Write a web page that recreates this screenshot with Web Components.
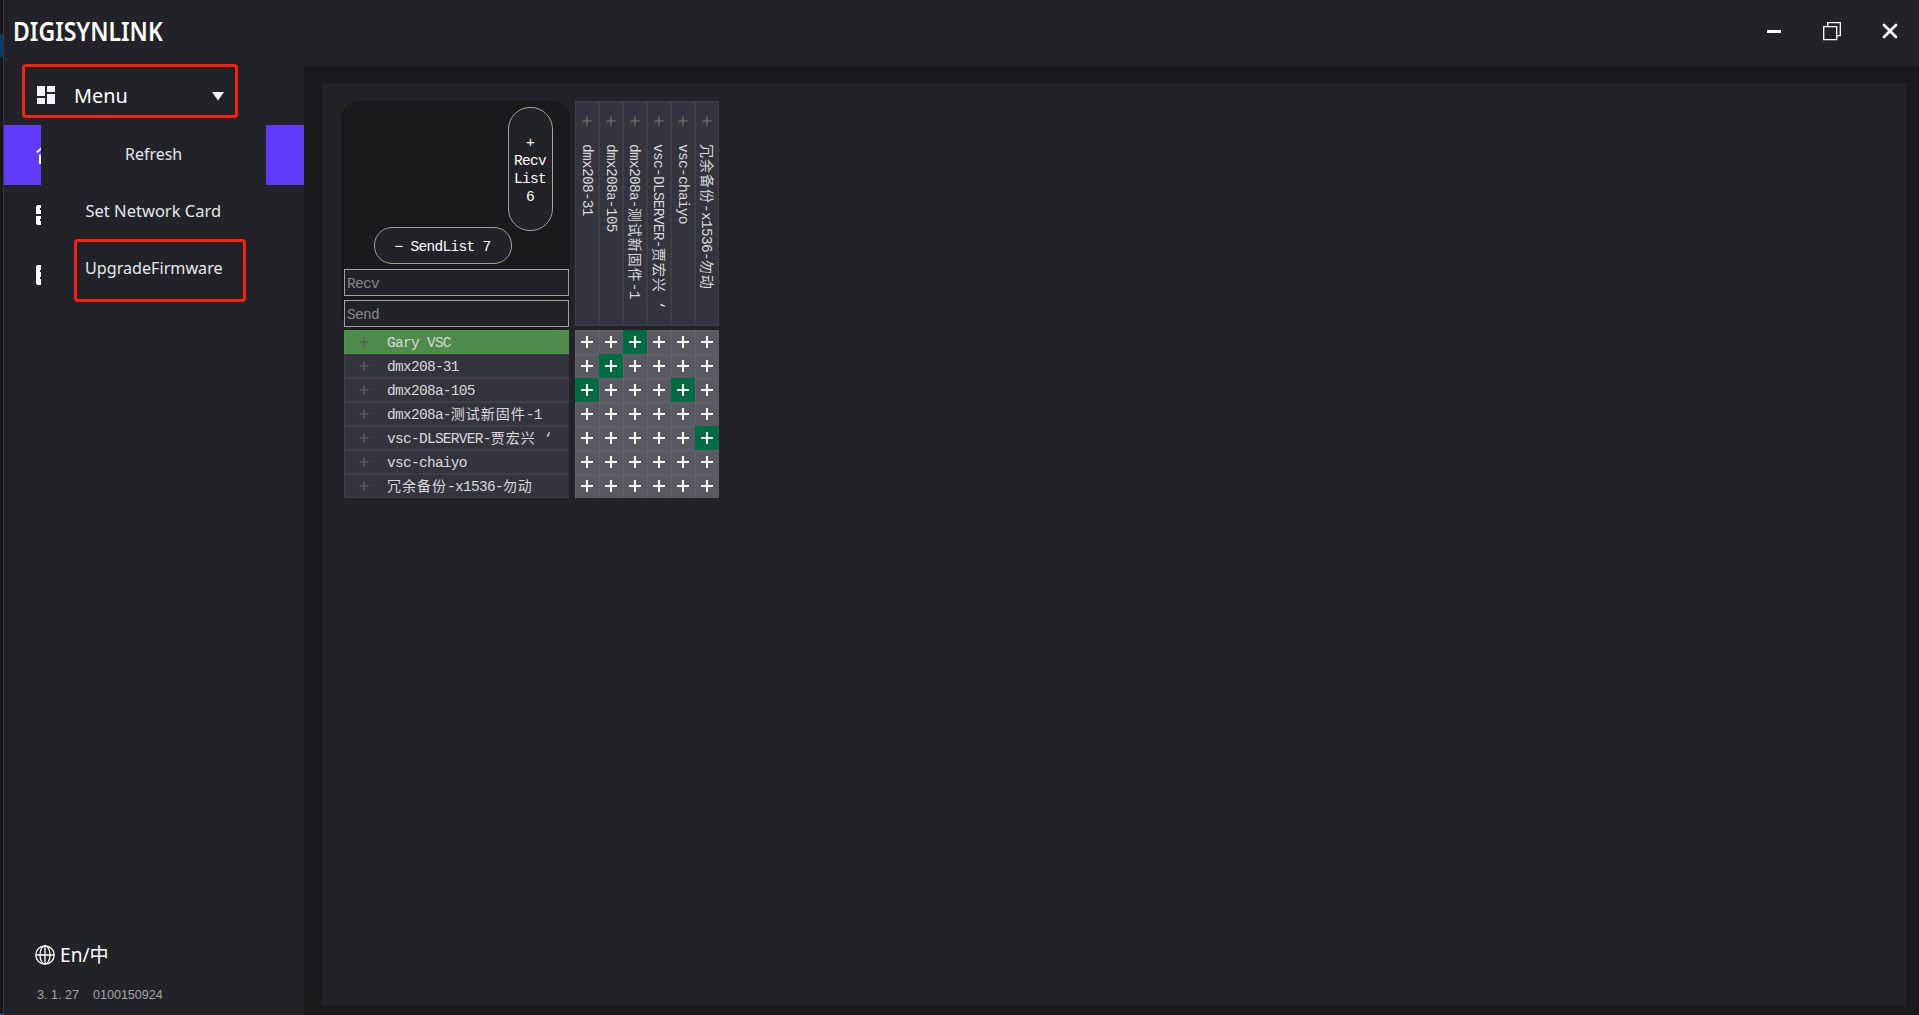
<!DOCTYPE html>
<html lang="zh">
<head>
<meta charset="utf-8">
<title>DIGISYNLINK</title>
<style>
html,body{margin:0;height:100%;background:#191a1b;overflow:hidden}
body{font-family:"Noto Sans","Noto Sans CJK SC",sans-serif;color:#fff}
</style>
</head>
<body>
<dsl-app></dsl-app>
<script>
const define=(name,html,init)=>customElements.define(name,class extends HTMLElement{
  connectedCallback(){
    if(this.shadowRoot)return;
    const root=this.attachShadow({mode:'open'});
    root.innerHTML=typeof html==='function'?html(this):html;
    if(init)init(this,root);
  }
});

/* A line of text squeezed or stretched to an exact width */
define('fit-text','<style>:host{display:block;white-space:pre;line-height:1}span{display:inline-block;transform-origin:0 50%}</style><span></span>',(el,root)=>{
  const s=root.querySelector('span');
  s.textContent=el.getAttribute('text');
  const w=+el.getAttribute('w');
  el.style.width=w+'px';
  s.style.transform=`scaleX(${w/s.offsetWidth})`;
});

/* Fixed-pitch text: 8px for Latin, 15px for Han */
define('grid-text',el=>{
  const parts=el.getAttribute('text').split(/([\u4e00-\u9fff]+)/).filter(Boolean);
  return `<style>:host{display:inline-block;white-space:pre;font:14.5px/18px "Liberation Mono",monospace;letter-spacing:-.72px}
  .h{font:14px/18px "Noto Sans CJK SC",sans-serif;letter-spacing:1px}</style>`+
  parts.map(p=>/[\u4e00-\u9fff]/.test(p)?`<span class="h">${p}</span>`:`<span>${p}</span>`).join('');
});

define('plus-mark',`<style>:host{display:block;width:12px;height:12px;color:#fff}svg{display:block}</style>
<svg width="12" height="12" viewBox="0 0 12 12"><path fill="currentColor" d="M5 0h2v5h5v2H7v5H5V7H0V5h5z"/></svg>`);

define('title-bar',`<style>
:host{display:flex;height:65px;background:#222328;align-items:center;justify-content:space-between;box-sizing:border-box;padding:0 21px 3px 9px}
fit-text{font-size:27.5px;font-weight:600}
nav{display:flex;gap:41px;align-items:center}
svg{display:block}
</style>
<fit-text text="DIGISYNLINK" w="150"></fit-text>
<nav>
<svg width="14" height="18"><path fill="#fff" d="M0 8h14v3H0z"/></svg>
<svg width="20" height="20" fill="none" stroke="#fff" stroke-width="1.3" style="margin:0 -1px 0 0"><path d="M1.700 5.700h13v13h-13zM5.700 5.500V1.700h12.600v13h-3.500"/></svg>
<svg width="16" height="16" stroke="#fff" stroke-width="2.800" stroke-linecap="round"><path d="M2 2l12 12M14 2L2 14"/></svg>
</nav>`);

define('drop-menu',`<style>
:host{display:flex;flex-direction:column;width:225px;height:190px;background:#222328;font-size:16.5px;color:#e6e8ec}
div{display:flex;height:57px;align-items:center;justify-content:center;padding-top:1px;margin-bottom:-1px}
.mark{position:absolute;left:33px;top:114px;width:172px;height:63px;box-sizing:border-box;border:3px solid #fb1e12;border-radius:4px}
</style>
<div><fit-text text="Refresh" w="57"></fit-text></div>
<div><fit-text text="Set Network Card" w="136"></fit-text></div>
<div><fit-text text="UpgradeFirmware" w="138"></fit-text></div>
<span class="mark"></span>`);

define('nav-item',`<style>
:host{display:flex;height:60px;align-items:center;padding-left:32px}
:host([active]){background:#603aff}
</style><slot></slot>`);

define('side-bar',`<style>
:host{display:flex;flex-direction:column;width:300px;background:#222328;position:relative}
.menu{display:flex;align-items:center;box-sizing:border-box;width:216px;height:54px;margin:-1px 0 7px 18px;border:3px solid #fb1e12;border-radius:4px;padding:8px 11px 0 12px}
.menu fit-text{font-size:19.500px;margin:2px 0 0 19px;flex:none}
.menu .arr{margin-left:auto;margin-top:2px}
svg{display:block}
drop-menu{position:absolute;left:37px;top:60px}
footer{margin-top:auto;padding:0 0 9px 31px}
.lang{display:flex;align-items:center;gap:5px;font-size:19.500px;height:30px}
.ver{display:flex;gap:14px;align-items:center;margin:14px 0 0 2px;height:22px;color:#a3a3a5;font:12px/20px "Liberation Sans",sans-serif}
</style>
<div class="menu">
<svg width="18" height="18" fill="#f5f5ff"><path d="M0 0h8v10H0zM10 0h8v6h-8zM0 12h8v6H0zM10 8h8v10h-8z"/></svg>
<fit-text text="Menu" w="54"></fit-text>
<svg class="arr" width="12" height="9"><path fill="#fff" d="M0 0h12L6 8.500z"/></svg>
</div>
<nav-item active><svg width="20" height="22" fill="none" stroke="#fff" stroke-width="2"><path d="M.700 8.500L10 .500l9.300 8M4 10.500v8.500h12v-8.500"/></svg></nav-item>
<nav-item><svg width="20" height="20" fill="#fff"><path d="M2 0h16q2 0 2 2v7H0V2q0-2 2-2zM0 11h20v7q0 2-2 2H2q-2 0-2-2z"/><path fill="#222328" d="M4 3h4v2H4zM4 14h4v2H4z"/></svg></nav-item>
<nav-item><svg width="20" height="20"><rect width="20" height="20" rx="2" fill="#fff"/><path fill="#222328" d="M4 5h4v2H4zM4 12h4v2H4z"/></svg></nav-item>
<drop-menu></drop-menu>
<footer>
<div class="lang"><svg width="20" height="20" fill="none" stroke="#fff" stroke-width="1.300"><circle cx="10" cy="10" r="9.200"/><ellipse cx="10" cy="10" rx="5" ry="9.200"/><path d="M10 1v18M1 10h18"/></svg><fit-text text="En/中" w="49"></fit-text></div>
<div class="ver"><fit-text text="3. 1. 27" w="42"></fit-text><fit-text text="0100150924" w="70"></fit-text></div>
</footer>`);

const names=['Gary VSC','dmx208-31','dmx208a-105','dmx208a-测试新固件-1','vsc-DLSERVER-贾宏兴 ‘','vsc-chaiyo','冗余备份-x1536-勿动'];
const linked=['0,2','1,1','2,0','2,4','4,5'];

define('send-row',el=>`<style>
:host{display:flex;align-items:center;height:24px;box-sizing:border-box;background:#34343e;border:1px solid #3f3f49;border-right-width:0;padding-left:13px;color:#d9d9d9}
:host([on]){background:#4f8c4c;border-color:#539150}
plus-mark{color:#5d5d60;transform:scale(.78)}grid-text{margin:${/[\u4e00-\u9fff]/.test(el.getAttribute('name'))?'-1px':'1px'} 0 0 17px}
</style><plus-mark></plus-mark><grid-text text="${el.getAttribute('name')}"></grid-text>`);

define('recv-col',el=>`<style>
:host{display:flex;flex-direction:column;align-items:center;width:24px;height:225px;box-sizing:border-box;background:#34343e;border:1px solid #3f3f49;padding-top:13px;color:#d9d9d9}
plus-mark{color:#66665f;transform:scale(.78)}
grid-text{writing-mode:vertical-rl;text-orientation:sideways;margin-top:17px}
</style><plus-mark></plus-mark><grid-text text="${el.getAttribute('name')}"></grid-text>`);

define('cross-cell',`<style>
:host{display:flex;width:24px;height:24px;box-sizing:border-box;background:#5a5a64;border:1px solid #64646c;border-right-width:0;border-bottom-width:0;padding:5px}
:host([on]){background:#036b41;border-color:#036b41}
</style><plus-mark></plus-mark>`);

define('corner-box',`<style>
:host{display:flex;flex-direction:column;box-sizing:border-box;width:229px;height:229px;border-radius:18px;background:#191a1b;padding:6px 1px 0 3px}
.pill{box-sizing:border-box;border:1px solid #a2a2a4;background:#222328;display:flex;align-items:center;justify-content:center}
.recv{align-self:flex-end;flex-direction:column;width:45px;height:124px;border-radius:22px;margin-right:16px;padding:2px 1px 0 0}
.send{width:138px;height:37px;border-radius:18px;margin:-4px 0 5px 30px;padding:2px 1px 0 0}
.in{box-sizing:border-box;height:27px;border:1px solid #a2a2a4;background:#222328;color:#86868a;padding:6px 2px 4px;display:flex;align-items:center}
.in+.in{margin-top:4px}
</style>
<div class="pill recv"><grid-text text="+"></grid-text><grid-text text="Recv"></grid-text><grid-text text="List"></grid-text><grid-text text="6"></grid-text></div>
<div class="pill send"><grid-text text="− SendList 7"></grid-text></div>
<div class="in"><grid-text text="Recv"></grid-text></div>
<div class="in"><grid-text text="Send"></grid-text></div>`);

define('route-matrix',`<style>
:host{display:grid;grid-template-columns:229px 144px;grid-template-rows:229px 168px;column-gap:5px}
.cols{display:flex}.rows{padding:0 1px 0 3px}
.cells{display:grid;grid-template-columns:repeat(6,24px)}
</style>
<corner-box></corner-box>
<div class="cols">${names.slice(1).map(n=>`<recv-col name="${n}"></recv-col>`).join('')}</div>
<div class="rows">${names.map((n,i)=>`<send-row name="${n}"${i?'':' on'}></send-row>`).join('')}</div>
<div class="cells">${names.map((_,r)=>[0,1,2,3,4,5].map(c=>`<cross-cell${linked.includes(r+','+c)?' on':''}></cross-cell>`).join('')).join('')}</div>`);

define('dsl-app',`<style>
:host{display:flex;width:1919px;height:1015px;background:#191a1b}
.edge{width:3px;background:linear-gradient(#17181a 34px,#043a63 34px 57px,#17181a 57px 1014px,#1e78c0 1014px);border-right:1px solid #38383d}
.win{flex:1;display:flex;flex-direction:column}
.body{flex:1;display:flex}
main{flex:1;display:flex;box-sizing:border-box;padding:18px 13px 9px 18px}
section{flex:1;background:#222328;display:flex;align-items:flex-start;padding:18px 19px}
</style>
<div class="edge"></div>
<div class="win"><title-bar></title-bar>
<div class="body"><side-bar></side-bar><main><section><route-matrix></route-matrix></section></main></div></div>`);
</script>
</body>
</html>
